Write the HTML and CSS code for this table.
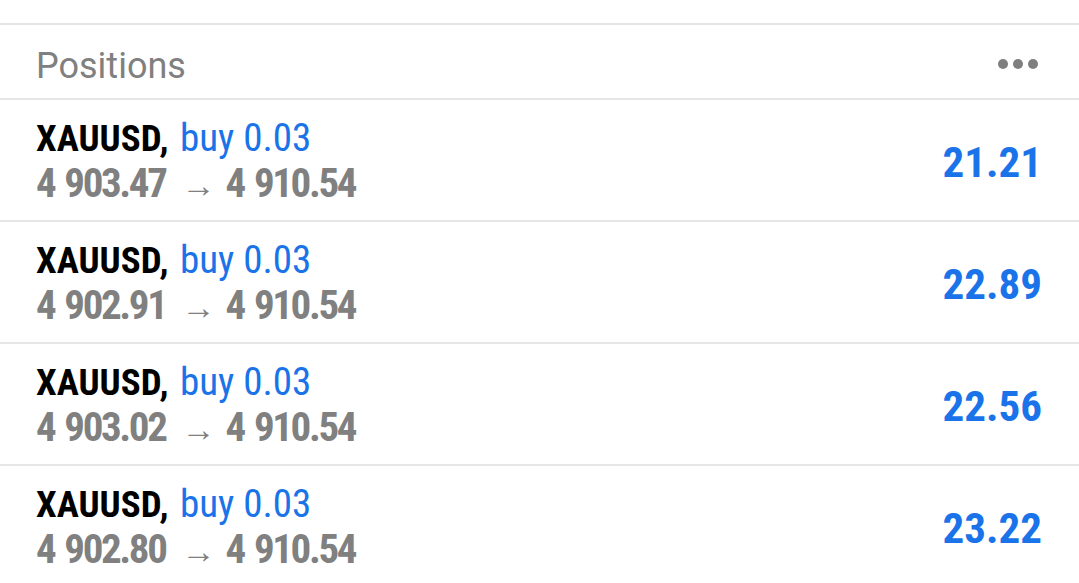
FILE: index.html
```html
<!DOCTYPE html>
<html>
<head>
<meta charset="utf-8">
<link rel="stylesheet" href="styles.css">
</head>
<body>
<div class="screen">
  <div class="topgap"></div>
  <div class="header">
    <span class="title">Positions</span>
    <span class="dots"><i></i><i></i><i></i></span>
  </div>
  <div class="row">
    <div class="info">
      <div class="l1"><span class="sym">XAUUSD,</span> <span class="side">buy 0.03</span></div>
      <div class="l2">4 903.47 <span class="arrow">→</span> 4 910.54</div>
    </div>
    <div class="profit">21.21</div>
  </div>
  <div class="row">
    <div class="info">
      <div class="l1"><span class="sym">XAUUSD,</span> <span class="side">buy 0.03</span></div>
      <div class="l2">4 902.91 <span class="arrow">→</span> 4 910.54</div>
    </div>
    <div class="profit">22.89</div>
  </div>
  <div class="row">
    <div class="info">
      <div class="l1"><span class="sym">XAUUSD,</span> <span class="side">buy 0.03</span></div>
      <div class="l2">4 903.02 <span class="arrow">→</span> 4 910.54</div>
    </div>
    <div class="profit">22.56</div>
  </div>
  <div class="row">
    <div class="info">
      <div class="l1"><span class="sym">XAUUSD,</span> <span class="side">buy 0.03</span></div>
      <div class="l2">4 902.80 <span class="arrow">→</span> 4 910.54</div>
    </div>
    <div class="profit">23.22</div>
  </div>
</div>
</body>
</html>
```
FILE: styles.css
```css
html, body {
  margin: 0;
  padding: 0;
  background: #ffffff;
}
.screen {
  width: 1079px;
  height: 583px;
  overflow: hidden;
  background: #ffffff;
}
.topgap {
  height: 23px;
  border-bottom: 2px solid #e6e6e6;
}
.header {
  height: 73px;
  border-bottom: 2px solid #e6e6e6;
  display: flex;
  align-items: center;
  justify-content: space-between;
  padding: 0 41px 0 36px;
}
.title {
  font-family: Roboto, "Noto Sans", sans-serif;
  font-size: 36px;
  color: #808080;
  padding-top: 9px;
}
.dots {
  display: flex;
  gap: 5px;
  padding-top: 4px;
}
.dots i {
  display: block;
  width: 10px;
  height: 10px;
  border-radius: 50%;
  background: #7f7f7f;
}
.row {
  height: 120px;
  border-bottom: 2px solid #e6e6e6;
  display: flex;
  align-items: center;
  justify-content: space-between;
  padding: 0 37px 0 36px;
  font-family: "Roboto Condensed", Roboto, sans-serif;
}
.info {
  display: flex;
  flex-direction: column;
  padding-top: 4px;
}
.l1 {
  font-size: 37px;
  line-height: 45px;
  white-space: nowrap;
}
.sym {
  font-weight: 700;
  color: #000000;
}
.side {
  color: #1a73e8;
  font-size: 39px;
  margin-left: 3px;
}
.l2 {
  font-size: 41px;
  line-height: 45px;
  font-weight: 700;
  letter-spacing: -2.4px;
  word-spacing: 3px;
  color: #808080;
  white-space: nowrap;
}
.arrow {
  font-weight: 400;
  font-size: 34px;
  letter-spacing: 0;
  word-spacing: 0;
  margin: 0 0 0 6px;
}
.profit {
  font-size: 43px;
  font-weight: 700;
  color: #1a73e8;
  padding-top: 4px;
}
```
